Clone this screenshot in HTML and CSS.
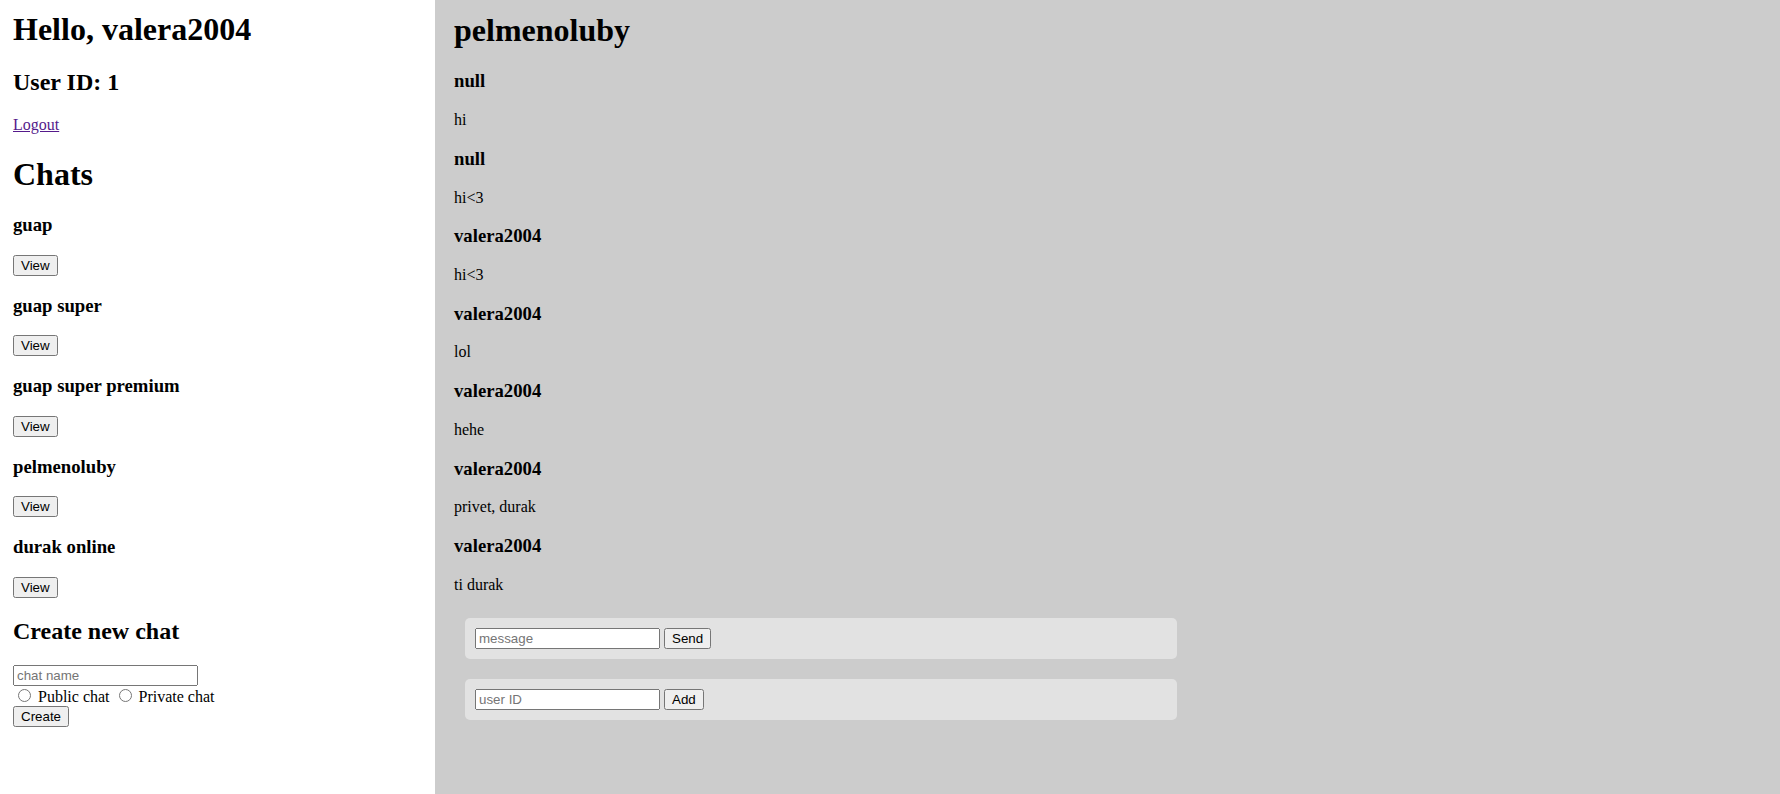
FILE: index.html
```html
<!DOCTYPE html>
<html lang="en">
<head>
<meta charset="utf-8">
<title>Chats</title>
<link rel="stylesheet" href="styles.css">
</head>
<body class="page">
<div class="app">
  <aside class="sidebar">
    <h1 class="title first">Hello, valera2004</h1>
    <h2 class="sub">User ID: 1</h2>
    <p class="para"><a class="link" href="#">Logout</a></p>
    <h1 class="title">Chats</h1>
    <div class="chat"><h3 class="chat-name">guap</h3><p class="para"><button class="btn" type="button">View</button></p></div>
    <div class="chat"><h3 class="chat-name">guap super</h3><p class="para"><button class="btn" type="button">View</button></p></div>
    <div class="chat"><h3 class="chat-name">guap super premium</h3><p class="para"><button class="btn" type="button">View</button></p></div>
    <div class="chat"><h3 class="chat-name">pelmenoluby</h3><p class="para"><button class="btn" type="button">View</button></p></div>
    <div class="chat"><h3 class="chat-name">durak online</h3><p class="para"><button class="btn" type="button">View</button></p></div>
    <h2 class="sub">Create new chat</h2>
    <form class="create">
      <input class="field" type="text" placeholder="chat name"><br>
      <input class="radio" type="radio" name="kind"> Public chat <input class="radio" type="radio" name="kind"> Private chat<br>
      <button class="btn" type="button">Create</button>
    </form>
  </aside>
  <main class="chatview">
    <h1 class="title first">pelmenoluby</h1>
    <div class="messages">
      <h3 class="chat-name">null</h3><p class="para">hi</p>
      <h3 class="chat-name">null</h3><p class="para">hi&lt;3</p>
      <h3 class="chat-name">valera2004</h3><p class="para">hi&lt;3</p>
      <h3 class="chat-name">valera2004</h3><p class="para">lol</p>
      <h3 class="chat-name">valera2004</h3><p class="para">hehe</p>
      <h3 class="chat-name">valera2004</h3><p class="para">privet, durak</p>
      <h3 class="chat-name">valera2004</h3><p class="para">ti durak</p>
    </div>
    <form class="box box-first"><input class="field" type="text" placeholder="message"> <button class="btn" type="button">Send</button></form>
    <form class="box"><input class="field" type="text" placeholder="user ID"> <button class="btn" type="button">Add</button></form>
  </main>
</div>
</body>
</html>
```

FILE: styles.css
```css
.page {
  margin: 0;
  font-family: "Liberation Serif", "Times New Roman", serif;
  font-size: 16px;
  color: #000;
  background: #ccc;
}

.app {
  display: flex;
  min-height: 794px;
}

.sidebar {
  box-sizing: border-box;
  width: 435px;
  flex: 0 0 435px;
  padding: 11px 13px 8px;
  background: #fff;
}

.chatview {
  flex: 1;
  padding: 12px 19px;
  background: #ccc;
}

.title {
  font-size: 32px;
  margin: 21.44px 0;
}

.first {
  margin-top: 0;
}

.sub {
  font-size: 24px;
  margin: 19.92px 0;
}

.chat-name {
  font-size: 18.72px;
  margin: 18.72px 0;
}

.para {
  margin: 16px 0;
}

.link {
  color: #551a8b;
  text-decoration: underline;
}

.btn,
.field {
  font-family: "Liberation Sans", Arial, sans-serif;
  font-size: 13.333px;
}

.radio {
  margin: 3px 3px 0 5px;
}

.box {
  box-sizing: border-box;
  width: 712px;
  margin: 20px 0 0 11px;
  padding: 10px;
  background: #e2e2e2;
  border-radius: 5px;
}

.box-first {
  margin-top: 24px;
}
```
